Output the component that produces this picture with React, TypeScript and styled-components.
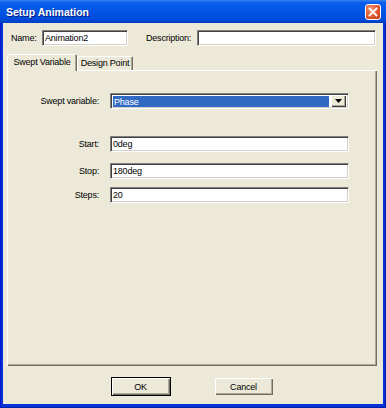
import { createGlobalStyle, styled } from "styled-components";

const GlobalStyle = createGlobalStyle`
  html, body {
    margin: 0;
    padding: 0;
    background: #ffffff;
  }
  body {
    font-family: "Liberation Sans", Arial, sans-serif;
    font-size: 9px;
    letter-spacing: -0.2px;
    color: #000;
  }
  * {
    box-sizing: border-box;
  }
`;

const Window = styled.div`
  width: 386px;
  height: 408px;
  display: flex;
  flex-direction: column;
  background: #0831d9;
  box-shadow: inset 1px 0 #0019cf, inset -1px -1px #001ea0;
`;

const TitleBar = styled.div`
  height: 23px;
  flex: none;
  display: flex;
  align-items: center;
  justify-content: space-between;
  padding: 0 5px 0 6px;
  background: linear-gradient(#3a81f3 0%, #0a5ded 12%, #0055e5 50%, #004ad9 85%, #003dc0 100%);
`;

const Title = styled.span`
  font-weight: bold;
  font-size: 10.5px;
  letter-spacing: 0;
  color: #fff;
  text-shadow: 1px 1px #0a1883;
`;

const CloseButton = styled.div`
  width: 16px;
  height: 16px;
  border: 1px solid #fff;
  border-radius: 3px;
  background: radial-gradient(circle at 35% 30%, #f0937a 0%, #e0562e 55%, #c03a14 100%);
  display: flex;
  align-items: center;
  justify-content: center;
`;

const Body = styled.div`
  flex: 1;
  margin: 0 3px 4px 3px;
  background: #ece9d8;
  display: flex;
  flex-direction: column;
  padding: 7px 6px 0 4px;
`;

const HeaderRow = styled.div`
  display: flex;
  align-items: center;
  height: 16px;
  padding: 0 1px 0 4px;
`;

const Label = styled.span<{ $width?: number; $gap?: number }>`
  flex: none;
  width: ${(p) => (p.$width ? `${p.$width}px` : "auto")};
  margin-left: ${(p) => p.$gap ?? 0}px;
  white-space: nowrap;
`;

const TextBox = styled.div<{ $width?: number }>`
  height: 16px;
  flex: ${(p) => (p.$width ? "none" : "1")};
  width: ${(p) => (p.$width ? `${p.$width}px` : "auto")};
  background: #fff;
  border: 1px solid;
  border-color: #808080 #ffffff #ffffff #808080;
  box-shadow: inset 1px 1px #404040, inset -1px -1px #d4d0c8;
  padding: 0 2px;
  display: flex;
  align-items: center;
  white-space: nowrap;
`;

const TabStrip = styled.div`
  display: flex;
  align-items: flex-end;
  height: 16px;
  margin-top: 8px;
  position: relative;
  z-index: 1;
`;

const Tab = styled.div<{ $active?: boolean; $width: number }>`
  width: ${(p) => p.$width}px;
  height: ${(p) => (p.$active ? 17 : 14)}px;
  margin-bottom: ${(p) => (p.$active ? -1 : 0)}px;
  background: #ece9d8;
  border-radius: 2px 2px 0 0;
  box-shadow: inset 1px 1px #ffffff, inset -1px 0 #716f64, inset -2px 0 #aca899;
  display: flex;
  align-items: center;
  justify-content: center;
  padding-bottom: ${(p) => (p.$active ? 2 : 0)}px;
  white-space: nowrap;
`;

const Panel = styled.div`
  height: 296px;
  flex: none;
  background: #ece9d8;
  box-shadow: inset 1px 1px #ffffff, inset -1px -1px #716f64, inset -2px -2px #aca899;
  padding-top: 23px;
  display: flex;
  flex-direction: column;
`;

const FieldRow = styled.div<{ $top?: number }>`
  display: grid;
  grid-template-columns: 92px 239px;
  column-gap: 11px;
  align-items: center;
  margin-top: ${(p) => p.$top ?? 0}px;
`;

const FieldLabel = styled.span`
  text-align: right;
  white-space: nowrap;
`;

const Combo = styled.div`
  height: 16px;
  background: #fff;
  border: 1px solid;
  border-color: #808080 #ffffff #ffffff #808080;
  box-shadow: inset 1px 1px #404040, inset -1px -1px #d4d0c8;
  padding: 2px 2px 1px 2px;
  display: flex;
`;

const ComboValue = styled.div`
  flex: 1;
  background: #316ac5;
  color: #fff;
  padding-left: 1px;
  display: flex;
  align-items: center;
`;

const ComboArrow = styled.div`
  width: 15px;
  flex: none;
  margin: -1px 0 0 2px;
  background: #ece9d8;
  box-shadow: inset 1px 1px #ffffff, inset -1px -1px #404040, inset -2px -2px #aca899;
  display: flex;
  align-items: center;
  justify-content: center;
`;

const ButtonRow = styled.div`
  display: flex;
  justify-content: center;
  gap: 43px;
  margin-top: 11px;
`;

const Button = styled.div<{ $default?: boolean }>`
  width: 60px;
  height: 19px;
  background: #ece9d8;
  border: 1px solid ${(p) => (p.$default ? "#000" : "transparent")};
  box-shadow: inset 1px 1px #ffffff, inset -1px -1px #716f64, inset -2px -2px #aca899;
  display: flex;
  align-items: center;
  justify-content: center;
`;

const App = () => {
  return (
    <>
      <GlobalStyle />
      <Window>
        <TitleBar>
          <Title>Setup Animation</Title>
          <CloseButton>
            <svg width="10" height="10" viewBox="0 0 10 10">
              <path d="M1.5 1.5 L8.5 8.5 M8.5 1.5 L1.5 8.5" stroke="#fff" strokeWidth="1.8" strokeLinecap="square" />
            </svg>
          </CloseButton>
        </TitleBar>
        <Body>
          <HeaderRow>
            <Label $width={31}>Name:</Label>
            <TextBox $width={86}>Animation2</TextBox>
            <Label $width={51} $gap={18}>Description:</Label>
            <TextBox />
          </HeaderRow>

          <TabStrip>
            <Tab $active $width={70}>Swept Variable</Tab>
            <Tab $width={56}>Design Point</Tab>
          </TabStrip>
          <Panel>
            <FieldRow>
              <FieldLabel>Swept variable:</FieldLabel>
              <Combo>
                <ComboValue>Phase</ComboValue>
                <ComboArrow>
                  <svg width="7" height="4" viewBox="0 0 7 4">
                    <path d="M0 0 H7 L3.5 4 Z" fill="#000" />
                  </svg>
                </ComboArrow>
              </Combo>
            </FieldRow>
            <FieldRow $top={27}>
              <FieldLabel>Start:</FieldLabel>
              <TextBox>0deg</TextBox>
            </FieldRow>
            <FieldRow $top={11}>
              <FieldLabel>Stop:</FieldLabel>
              <TextBox>180deg</TextBox>
            </FieldRow>
            <FieldRow $top={8}>
              <FieldLabel>Steps:</FieldLabel>
              <TextBox>20</TextBox>
            </FieldRow>
          </Panel>

          <ButtonRow>
            <Button $default>OK</Button>
            <Button>Cancel</Button>
          </ButtonRow>
        </Body>
      </Window>
    </>
  );
};

export default App;
